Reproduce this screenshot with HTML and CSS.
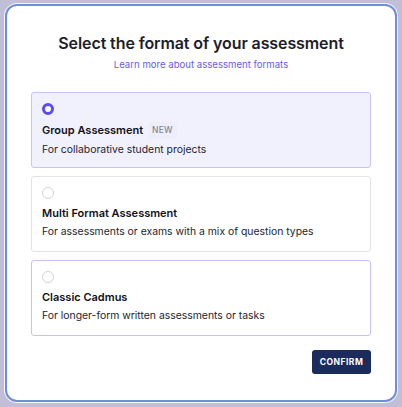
FILE: index.html
```html
<!DOCTYPE html>
<html lang="en">
<head>
<meta charset="utf-8">
<title>Select the format of your assessment</title>
<link rel="stylesheet" href="styles.css">
</head>
<body>
<div class="modal">
  <h1 class="title">Select the format of your assessment</h1>
  <div class="learn"><a href="#" class="learn-link">Learn more about assessment formats</a></div>
  <div class="options">
    <div class="option selected">
      <span class="radio radio-on"></span>
      <div class="option-title">Group Assessment <span class="badge">NEW</span></div>
      <div class="option-desc">For collaborative student projects</div>
    </div>
    <div class="option">
      <span class="radio"></span>
      <div class="option-title">Multi Format Assessment</div>
      <div class="option-desc">For assessments or exams with a mix of question types</div>
    </div>
    <div class="option hover">
      <span class="radio"></span>
      <div class="option-title">Classic Cadmus</div>
      <div class="option-desc">For longer-form written assessments or tasks</div>
    </div>
  </div>
  <div class="actions">
    <button class="confirm" type="button">CONFIRM</button>
  </div>
</div>
</body>
</html>
```
FILE: styles.css
```css
html, body {
  margin: 0;
  padding: 0;
}
body {
  background: #c1bfd7;
  width: 402px;
  height: 407px;
  box-sizing: border-box;
  padding: 4px 5px 5px 5px;
  font-family: Inter, "Liberation Sans", sans-serif;
  color: #1b1b24;
  overflow: hidden;
}
.modal {
  box-sizing: border-box;
  height: 398px;
  background: #fff;
  border: 2px solid #6e8ddb;
  border-radius: 12px;
  box-shadow: 0 0 0 1px #f4f4fa;
  padding: 26px 24px 0 24px;
  display: flex;
  flex-direction: column;
}
.title {
  margin: 0;
  text-align: center;
  font-size: 16px;
  font-weight: 600;
  line-height: 22px;
  letter-spacing: -0.1px;
  color: #1d1d2b;
}
.learn {
  text-align: center;
  margin-top: 4px;
  font-size: 9.6px;
  line-height: 14px;
}
.learn-link {
  color: #6a5de3;
  text-decoration: none;
}
.options {
  margin-top: 20px;
  display: flex;
  flex-direction: column;
  gap: 8px;
}
.option {
  box-sizing: border-box;
  flex: 0 0 76px;
  height: 76px;
  border: 1px solid #e4e4e8;
  border-radius: 3px;
  padding: 10px 10px 0 10px;
  display: flex;
  flex-direction: column;
  align-items: flex-start;
}
.option.selected {
  background: #f1f0fd;
  border-color: #c9c4f4;
}
.option.hover {
  border-color: #c7c2f2;
}
.radio {
  box-sizing: border-box;
  flex: 0 0 12px;
  width: 12px;
  height: 12px;
  border-radius: 50%;
  border: 1px solid #d2d2d8;
  background: #fff;
}
.radio-on {
  border: 3px solid #5a4de6;
}
.option-title {
  margin-top: 7px;
  font-size: 11px;
  font-weight: 600;
  line-height: 14px;
  color: #111118;
  display: flex;
  align-items: center;
  gap: 5px;
}
.badge {
  font-size: 8.5px;
  font-weight: 500;
  color: #858793;
  background: #eceefa;
  padding: 1px 4px;
  border-radius: 2px;
  letter-spacing: 0.2px;
}
.option-desc {
  margin-top: 5px;
  font-size: 10.4px;
  line-height: 14px;
  color: #24242c;
}
.actions {
  margin-top: 14px;
  display: flex;
  justify-content: flex-end;
}
.confirm {
  width: 59px;
  height: 24px;
  border: none;
  border-radius: 3px;
  background: #1a2b5c;
  color: #fff;
  font-family: Inter, "Liberation Sans", sans-serif;
  font-size: 8.5px;
  font-weight: 700;
  letter-spacing: 0.5px;
  padding: 0;
}
```
